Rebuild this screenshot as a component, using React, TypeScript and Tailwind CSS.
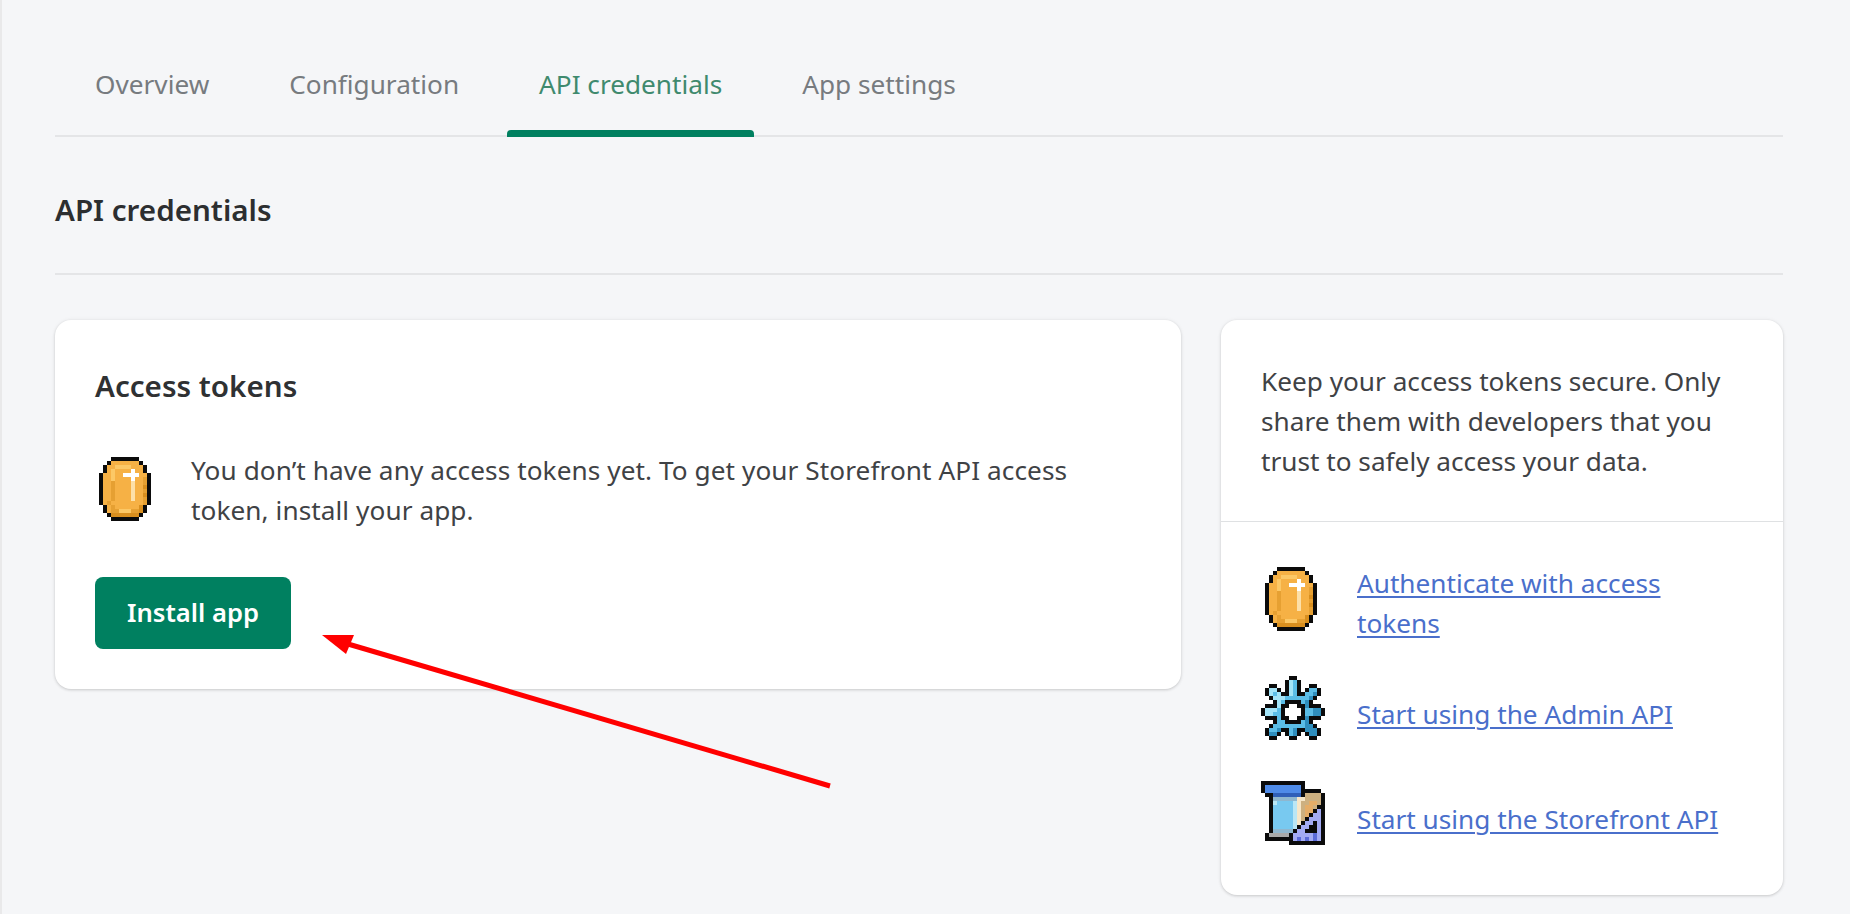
import React from "react";

const PALETTE: Record<string, string> = {
  K: "#0b0b0b",
  O: "#f6b145",
  L: "#fcc866",
  D: "#e6a032",
  P: "#d98f1f",
  W: "#ffffff",
  C: "#fde0a8",
  B: "#5bbde6",
  A: "#a4e4f7",
  E: "#2f8ebd",
};

const PALETTE_TOOLS: Record<string, string> = {
  K: "#0b0b0b",
  B: "#4f8be8",
  E: "#2f5fb8",
  T: "#cdb080",
  Y: "#e5ad68",
  P: "#f6e6c8",
  S: "#8fb7cf",
  C: "#b9e6f5",
  L: "#78c9f0",
  G: "#a9a9a9",
  A: "#a3abf4",
  D: "#5c6cd8",
};

const COIN = [
  "....KKKKKKK.....",
  "...KOOOOOOOK....",
  "..KOOLLLLOOOK...",
  "..KOLOOOOWOOK...",
  ".KOOLOOWWWWOOK..",
  ".KOOLOOOOWOODK..",
  ".KOODOOOOCOODK..",
  ".KOODOOOOCOOPK..",
  ".KOODOOOOCOODK..",
  ".KOODOOOOCOOPK..",
  ".KOODOOOOCOODK..",
  ".KODOOOOOOOODK..",
  "..KODOOOOOOPK...",
  "..KODDLLLDDPK...",
  "...KPPPPPPPK....",
  "....KKKKKKK.....",
];

const GEAR = [
  ".......KK.......",
  "......KABK......",
  "..KK..KABK..KK..",
  ".KAAK.KABK.KBBK.",
  ".KABAKKABKKBBEK.",
  "..KAAABBBBBBEK..",
  "...KABKKKKBEK...",
  ".KKKAKKWWKKEKKK.",
  "KAAABKWWWWKBBEEK",
  "KAABBKWWWWKBBEEK",
  ".KKKBKKWWKKEKKK.",
  "...KBBKKKKBEK...",
  "..KBBBBBBBBEEK..",
  ".KBBEKKBEKKEEEK.",
  ".KEEK.KBEK.KEEK.",
  "..KK...KK...KK..",
];

const TOOLS = [
  "KKKKKKKKKKK.....",
  "KBBBBBBBBBK.....",
  "KBBBBBBBBBKKKKK.",
  ".KKEEEEEEEKTTTTK",
  "..KSSSSSSPPTTTTK",
  "..KCLLLLCPTTYYTK",
  "..KLLLLLCPTYYTKK",
  "..KLLLLLCPTYYKAK",
  "..KLLLLLCPTYKAAK",
  "..KLLLLLCPTKAAAK",
  "..KLLLLLCPKAAKAK",
  "..KLLLLLCKAAKKAK",
  "..KSSSSSKAAKKKAK",
  ".KGGGGGKAAAAADAK",
  ".KKKKKKKADADADAK",
  ".......KKKKKKKKK",
];

function PixelIcon({
  rows,
  palette,
  className = "",
}: {
  rows: string[];
  palette: Record<string, string>;
  className?: string;
}) {
  return (
    <svg
      width="64"
      height="64"
      viewBox="0 0 16 16"
      shapeRendering="crispEdges"
      className={`block shrink-0 ${className}`}
    >
      {rows.flatMap((row, y) =>
        row.split("").map((c, x) =>
          c === "." ? null : <rect key={`${x}-${y}`} x={x} y={y} width="1" height="1" fill={palette[c]} />
        )
      )}
    </svg>
  );
}

const cardCls =
  "bg-white rounded-2xl shadow-[0_0_5px_rgba(23,24,24,0.05),0_1px_3px_rgba(0,0,0,0.16)]";
const linkCls = "text-[#4a6fcb] underline underline-offset-[3px] decoration-[1.5px]";

export default function App() {
  return (
    <div
      className="relative w-full h-[914px] overflow-hidden bg-[#f5f6f8] border-l-2 border-[#e9e9ea] pl-[53px] pr-[67px] text-[26.2px] leading-[40px] text-[#3f4245]"
      style={{ fontFamily: '"Noto Sans", "Open Sans", sans-serif' }}
    >
      <nav className="flex gap-4 px-2 pt-[33px] border-b-2 border-[#e4e5e7] h-[137px]">
        {["Overview", "Configuration", "API credentials", "App settings"].map((t, i) => (
          <div
            key={t}
            className={`relative h-[102px] flex items-center px-8 ${i === 2 ? "text-[#3f8a6e]" : "text-[#777b7f]"}`}
          >
            {t}
            {i === 2 && (
              <span className="absolute left-0 right-0 -bottom-[2px] h-[7px] rounded-t-[4px] bg-[#008060]" />
            )}
          </div>
        ))}
      </nav>

      <div className="h-[138px] border-b-2 border-[#e4e5e7] pt-[53px]">
        <h2 className="font-semibold text-[#2c2e30] text-[29.6px] leading-[40px]">API credentials</h2>
      </div>

      <div className="grid grid-cols-[1126px_562px] gap-[40px] items-start mt-[45px]">
        <section className={`${cardCls} h-[369px] px-10 pt-[46px]`}>
          <h3 className="font-semibold text-[#2f3133] text-[29.6px] leading-[40px]">Access tokens</h3>
          <div className="flex items-center gap-8 mt-[44px]">
            <PixelIcon rows={COIN} palette={PALETTE} className="-mt-[2px]" />
            <p className="tracking-[0.07px]">
              You don’t have any access tokens yet. To get your Storefront API access
              <br />
              token, install your app.
            </p>
          </div>
          <button className="mt-[47px] w-[196px] h-[72px] rounded-lg bg-[#008060] text-white font-semibold text-[25.6px] flex items-center justify-center">
            Install app
          </button>
        </section>

        <aside className={`${cardCls} h-[575px]`}>
          <p className="px-[40px] pt-[41px] pb-[40px] border-b border-[#dfe1e3]">
            Keep your access tokens secure. Only
            <br />
            share them with developers that you
            <br />
            trust to safely access your data.
          </p>
          <div className="pl-[40px] pr-8 pt-[41px]">
            <div className="flex items-start gap-8 h-[80px]">
              <PixelIcon rows={COIN} palette={PALETTE} className="mt-[4px]" />
              <a className={linkCls}>
                Authenticate with access
                <br />
                tokens
              </a>
            </div>
            <div className="flex items-end gap-8 mt-[33px]">
              <PixelIcon rows={GEAR} palette={PALETTE} />
              <a className={`${linkCls} pb-[6px]`}>Start using the Admin API</a>
            </div>
            <div className="flex items-end gap-8 mt-[41px]">
              <PixelIcon rows={TOOLS} palette={PALETTE_TOOLS} />
              <a className={`${linkCls} pb-[6px]`}>Start using the Storefront API</a>
            </div>
          </div>
        </aside>
      </div>

      <svg className="absolute left-0 top-0 pointer-events-none" width="1850" height="914" style={{ marginLeft: -2 }}>
        <line x1="830" y1="786" x2="348" y2="644" stroke="#ff0000" strokeWidth="5" />
        <polygon points="322,635 354,635 346,654" fill="#ff0000" />
      </svg>
    </div>
  );
}
